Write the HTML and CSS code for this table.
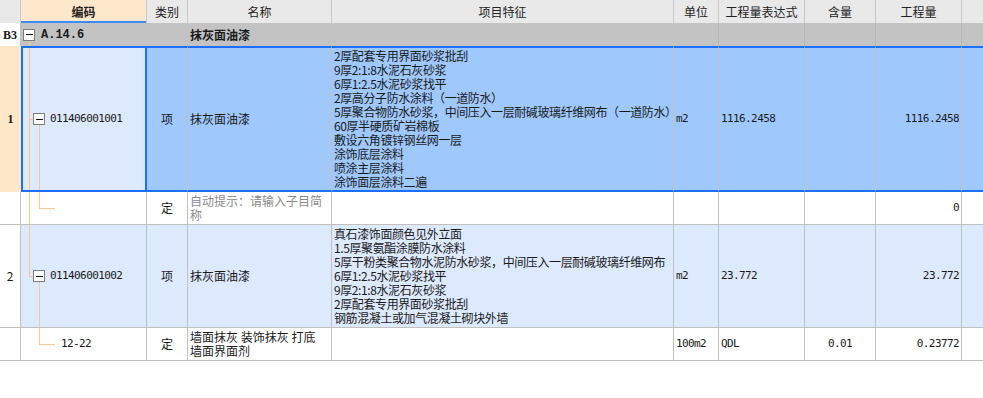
FILE: index.html
```html
<!DOCTYPE html>
<html lang="zh-CN">
<head>
<meta charset="utf-8">
<title>分部分项清单</title>
<link rel="stylesheet" href="styles.css">
</head>
<body>
<div class="sheet">
  <div class="row head">
    <div class="c rn"></div>
    <div class="c code-h">编码</div>
    <div class="c">类别</div>
    <div class="c">名称</div>
    <div class="c">项目特征</div>
    <div class="c">单位</div>
    <div class="c">工程量表达式</div>
    <div class="c">含量</div>
    <div class="c">工程量</div>
    <div class="c last"></div>
  </div>

  <div class="row group">
    <div class="c rn rn-b">B3</div>
    <div class="c code merge"><span class="node down"><span class="box"></span></span><span class="gcode">A.14.6</span></div>
    <div class="c merge"></div>
    <div class="c merge name"><b>抹灰面油漆</b></div>
    <div class="c merge"></div>
    <div class="c"></div>
    <div class="c"></div>
    <div class="c"></div>
    <div class="c"></div>
    <div class="c last"></div>
  </div>

  <div class="row sel">
    <div class="c rn rn-b">1</div>
    <div class="c code"><span class="g tee"></span><span class="node down"><span class="box"></span></span><span class="ctext num">011406001001</span></div>
    <div class="c cat">项</div>
    <div class="c name">抹灰面油漆</div>
    <div class="c feat">2厚配套专用界面砂浆批刮<br>9厚2:1:8水泥石灰砂浆<br>6厚1:2.5水泥砂浆找平<br>2厚高分子防水涂料（一道防水）<br>5厚聚合物防水砂浆，中间压入一层耐碱玻璃纤维网布（一道防水）<br>60厚半硬质矿岩棉板<br>敷设六角镀锌钢丝网一层<br>涂饰底层涂料<br>喷涂主层涂料<br>涂饰面层涂料二遍</div>
    <div class="c unit num">m2</div>
    <div class="c expr num">1116.2458</div>
    <div class="c ratio"></div>
    <div class="c qty num">1116.2458</div>
    <div class="c last"></div>
  </div>

  <div class="row">
    <div class="c rn"></div>
    <div class="c code"><span class="g pass"></span><span class="g g2 elbow"></span></div>
    <div class="c cat">定</div>
    <div class="c name hint">自动提示：请输入子目简称</div>
    <div class="c feat"></div>
    <div class="c unit"></div>
    <div class="c expr"></div>
    <div class="c ratio"></div>
    <div class="c qty num">0</div>
    <div class="c last"></div>
  </div>

  <div class="row alt">
    <div class="c rn">2</div>
    <div class="c code"><span class="g elbow"></span><span class="node down"><span class="box"></span></span><span class="ctext num">011406001002</span></div>
    <div class="c cat">项</div>
    <div class="c name">抹灰面油漆</div>
    <div class="c feat">真石漆饰面颜色见外立面<br>1.5厚聚氨酯涂膜防水涂料<br>5厚干粉类聚合物水泥防水砂浆，中间压入一层耐碱玻璃纤维网布<br>6厚1:2.5水泥砂浆找平<br>9厚2:1:8水泥石灰砂浆<br>2厚配套专用界面砂浆批刮<br>钢筋混凝土或加气混凝土砌块外墙</div>
    <div class="c unit num">m2</div>
    <div class="c expr num">23.772</div>
    <div class="c ratio"></div>
    <div class="c qty num">23.772</div>
    <div class="c last"></div>
  </div>

  <div class="row">
    <div class="c rn"></div>
    <div class="c code"><span class="g"></span><span class="g g2 elbow"></span><span class="ctext num sub">12-22</span></div>
    <div class="c cat">定</div>
    <div class="c name">墙面抹灰 装饰抹灰 打底<br>墙面界面剂</div>
    <div class="c feat"></div>
    <div class="c unit num">100m2</div>
    <div class="c expr num">QDL</div>
    <div class="c ratio num">0.01</div>
    <div class="c qty num">0.23772</div>
    <div class="c last"></div>
  </div>
</div>
</body>
</html>
```

FILE: styles.css
```css
* { box-sizing: border-box; }
html, body { margin: 0; padding: 0; background: #fff; }
body {
  font-family: "Noto Sans CJK SC", "Noto Sans", sans-serif;
  font-size: 12px;
  line-height: 14px;
  color: #1a1a1a;
}
.sheet { width: 983px; overflow: hidden; }
.row {
  display: grid;
  grid-template-columns: 21px 126px 41px 144px 342px 45px 86px 71px 86px 1fr;
}
.c {
  display: flex;
  align-items: center;
  min-width: 0;
  padding: 2px 2px;
  border-right: 1px solid #c0c0c0;
  border-bottom: 1px solid #c0c0c0;
}
.c.last { border-right: 0; }

/* header */
.head .c {
  height: 23px;
  padding: 0;
  justify-content: center;
  background: #e9e9e9;
  border-bottom: 0;
  border-right-color: #c9c9c9;
  color: #222;
}
.head .code-h {
  background: #fde8cc;
  font-weight: bold;
  box-shadow: inset 0 -2px #3b8cf6;
}

/* group row */
.group .c {
  height: 23px;
  padding: 0;
  background: #c3c3c3;
  border-bottom: 0;
  border-right-color: #b7b7b7;
}
.group .c.rn { background: #fff; border-right-color: #c0c0c0; }
.group .c.merge { border-right-color: transparent; }
.group .code { padding-left: 2px; }
.group .name { padding-left: 2px; }
.gcode {
  align-self: center;
  margin-left: 6px;
  font-family: "Liberation Mono", monospace;
  font-weight: bold;
  font-size: 12px;
}

/* row number */
.rn { justify-content: center; padding: 0; }
.rn-b {
  font-family: "Liberation Serif", serif;
  font-weight: bold;
  font-size: 12px;
}

/* cells */
.code { align-items: stretch; padding: 0 0 0 3px; }
.ctext { align-self: center; margin-left: 5px; white-space: nowrap; }
.ctext.sub { margin-left: 16px; }
.cat { justify-content: center; }
.name { padding-left: 2px; }
.hint { color: #8a8a8a; }
.feat {
  white-space: nowrap;
  padding: 2px 1px 2px 2px;
  letter-spacing: -0.4px;
}
.unit, .expr { padding-left: 2px; }
.ratio { justify-content: center; }
.qty { justify-content: flex-end; padding-right: 2px; }
.num {
  font-family: "DejaVu Sans Mono", monospace;
  font-size: 11px;
  letter-spacing: -0.6px;
}

/* selected row */
.sel .c {
  background: #9fc8fc;
  border-top: 2px solid #1c6ffb;
  border-bottom: 2px solid #1c6ffb;
  padding-top: 1px;
  padding-bottom: 1px;
}
.sel .c.rn {
  background: #fee7c9;
  border: 0;
}
.sel .c.code {
  background: #dde9fd;
  border-left: 2px solid #1c6ffb;
  border-right: 2px solid #1c6ffb;
  padding: 0 0 0 1px;
}

/* alternate row */
.alt .c { background: #dde9fd; }
.alt .c.rn { background: #fff; }

/* tree guides */
.g { position: relative; flex: none; width: 9px; }
.g.g2 { width: 12px; }
.g.pass::before,
.g.tee::before,
.g.elbow::before {
  content: "";
  position: absolute;
  left: 5px;
  top: 0;
  width: 1px;
  background: #fbc88a;
}
.g.pass::before,
.g.tee::before { bottom: 0; }
.g.elbow::before { height: calc(50% + 1px); }
.g.tee::after,
.g.elbow::after {
  content: "";
  position: absolute;
  left: 5px;
  top: 50%;
  width: 4px;
  height: 1px;
  background: #fbc88a;
}
.g.g2.elbow::before { left: 6px; }
.g.g2.elbow::after { left: 6px; width: 16px; }

.node {
  position: relative;
  flex: none;
  width: 12px;
  display: flex;
  align-items: center;
}
.node.down::after {
  content: "";
  position: absolute;
  left: 6px;
  top: 50%;
  bottom: 0;
  width: 1px;
  background: #fbc88a;
}
.box {
  position: relative;
  z-index: 1;
  width: 12px;
  height: 12px;
  border: 1px solid #7c7c7c;
  background: #fff;
  display: flex;
  align-items: center;
  justify-content: center;
}
.box::before {
  content: "";
  width: 7px;
  height: 1px;
  background: #111;
}
```
